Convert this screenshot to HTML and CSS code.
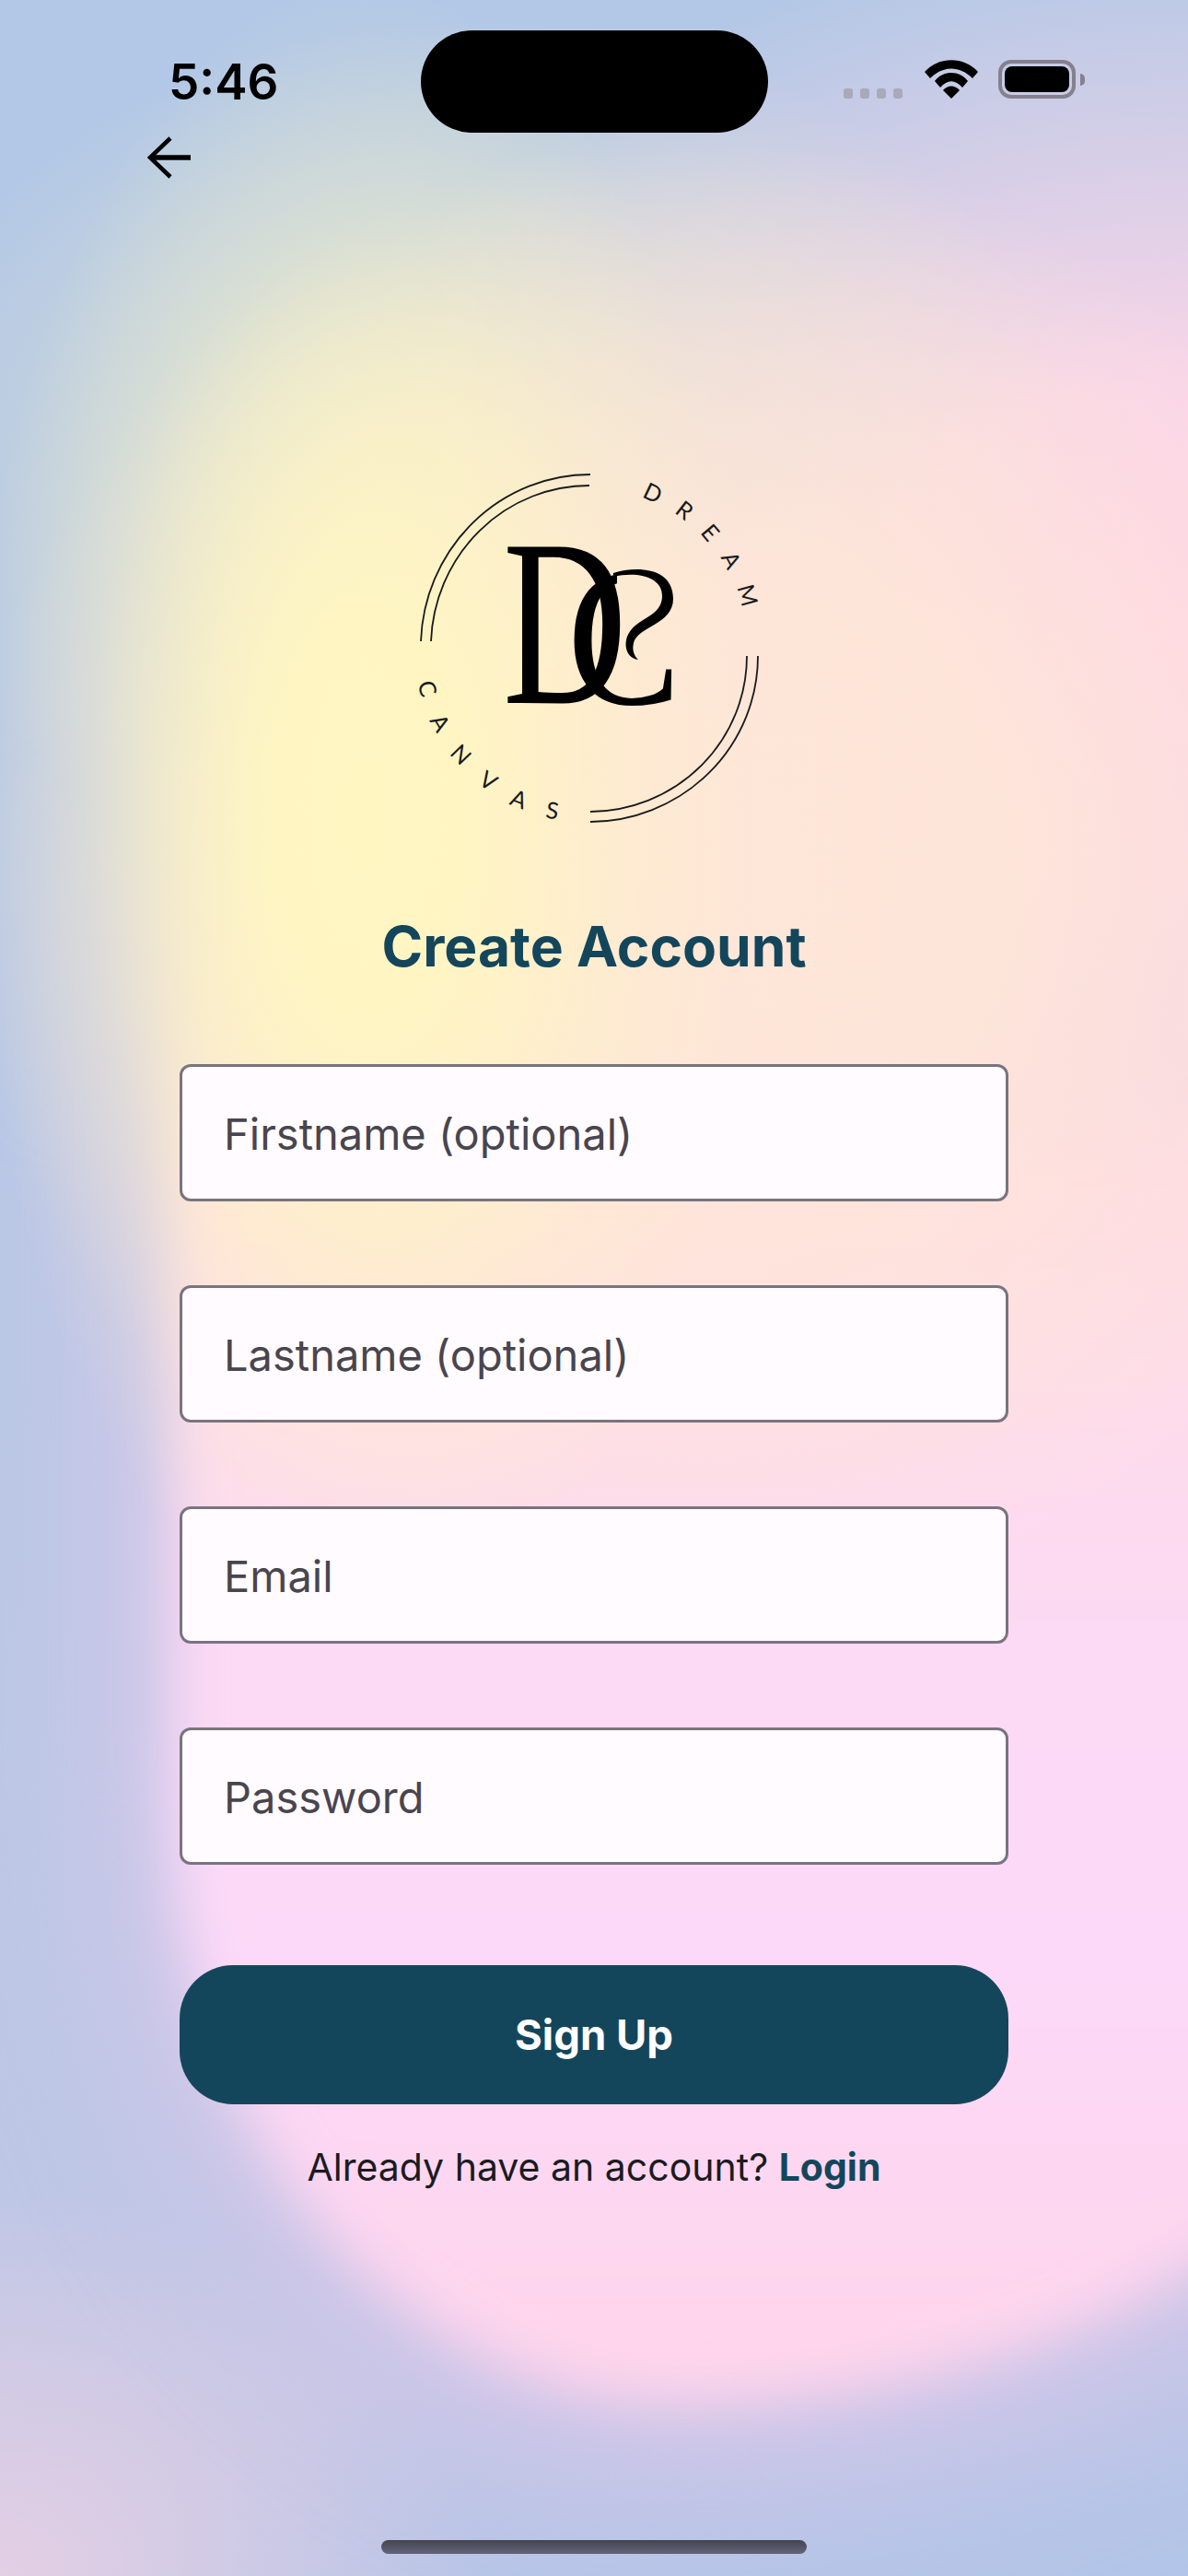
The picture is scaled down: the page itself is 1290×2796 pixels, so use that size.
FILE: index.html
```html
<!DOCTYPE html>
<html lang="en">
<head>
    <meta charset="UTF-8">
    <meta name="viewport" content="width=device-width, initial-scale=1.0">
    <title>Create Account</title>
    <link rel="stylesheet" href="styles.css">
</head>
<body>
    <div class="screen">
        <div class="blob-fade"><div class="blob"></div></div>
        <div class="glow"></div>

        <!-- Status bar -->
        <div class="status-bar">
            <div class="time">5:46</div>
            <div class="island"></div>
            <div class="status-icons">
                <div class="signal"><span></span><span></span><span></span><span></span></div>
                <svg class="wifi" width="58" height="42" viewBox="0 0 58 42">
                    <path d="M0 13 C15 -4 43 -4 58 13 L52 20 C38 6 20 6 6 20 Z"/>
                    <path d="M11 23 C20 11 38 11 47 23 L41 30 C33 21 25 21 17 30 Z"/>
                    <path d="M20 33 C25 27 33 27 38 33 L29 42 Z"/>
                </svg>
                <div class="battery"><div class="battery-fill"></div></div>
            </div>
        </div>

        <button class="back" aria-label="Back">
            <svg width="47" height="46" viewBox="0 0 47 46">
                <path d="M25 2 L3 23 L25 44" fill="none" stroke="#000" stroke-width="4.5"/>
                <path d="M3 23 H47" fill="none" stroke="#000" stroke-width="5.5"/>
            </svg>
        </button>

        <!-- Logo -->
        <svg class="logo" width="430" height="430" viewBox="0 0 430 430">
            <defs>
                <path id="dreamArc" d="M266 50 A172 172 0 0 1 379 183"/>
                <path id="canvasArc" d="M24 252 A190 190 0 0 0 193 402"/>
                <clipPath id="cClip">
                    <rect x="150" y="100" width="90" height="200"/>
                    <rect x="240" y="205" width="80" height="95"/>
                </clipPath>
            </defs>
            <g fill="none" stroke="#1a1a1a" stroke-width="1.8">
                <path d="M211 25 A184 188 0 0 0 27 206"/>
                <path d="M210 37 A172 176 0 0 0 38 206"/>
                <path d="M393 222 A183 180 0 0 1 211 402"/>
                <path d="M381 222 A171 169 0 0 1 211 391"/>
            </g>
            <text class="logo-ring logo-dream"><textPath href="#dreamArc">DREAM</textPath></text>
            <text class="logo-ring logo-canvas"><textPath href="#canvasArc">CANVAS</textPath></text>
            <text class="logo-d" transform="translate(116 273) scale(0.72 1)">D</text>
            <g clip-path="url(#cClip)">
                <text class="logo-c" transform="translate(186 274) scale(0.86 1)">C</text>
            </g>
            <path d="M236 132 C262 124 301 126 301 160 C301 188 262 190 258 208 C256 216 259 222 263 226 C248 224 246 205 255 194 C266 180 288 178 289 158 C290 136 262 130 236 136 Z"/>
        </svg>

        <h1 class="title">Create Account</h1>

        <!-- Form -->
        <form class="form">
            <input class="field" type="text" placeholder="Firstname (optional)">
            <input class="field" type="text" placeholder="Lastname (optional)">
            <input class="field" type="email" placeholder="Email">
            <input class="field" type="password" placeholder="Password">
            <button class="submit" type="button">Sign Up</button>
        </form>

        <p class="login">Already have an account? <a href="#">Login</a></p>

        <div class="home-bar"></div>
    </div>
</body>
</html>
```

FILE: styles.css
```css
* {
    box-sizing: border-box;
}

body {
    margin: 0;
    font-family: Inter, "Noto Sans", sans-serif;
    color: #1c1b1f;
}

.screen {
    position: relative;
    width: 1290px;
    height: 2796px;
    overflow: hidden;
    display: flex;
    flex-direction: column;
    background:
        radial-gradient(ellipse 520px 420px at 0 2796px, #e4cfe4 0%, rgba(228, 207, 228, 0) 100%),
        linear-gradient(172deg, #b2c8e6 0%, #b6c8e6 30%, #bcc8e6 70%, #c0c6e6 90%, #b2c5e8 100%);
}

/* Soft colour shapes behind the page */
.blob-fade {
    position: absolute;
    inset: 0;
    overflow: hidden;
    -webkit-mask-image: linear-gradient(180deg, transparent 780px, #000 1280px);
    mask-image: linear-gradient(180deg, transparent 780px, #000 1280px);
}

.blob {
    position: absolute;
    left: 185px;
    top: 0;
    width: 1500px;
    height: 2610px;
    border-radius: 560px 300px 945px 555px / 560px 300px 763px 660px;
    filter: blur(30px);
    box-shadow: 0 0 170px 60px rgba(216, 198, 234, 0.9);
    background: linear-gradient(180deg, #ffd9e3 0%, #ffd9e3 45%, #fedce8 55%, #fcd9f4 68%, #fcd9f8 82%, #fdd6f0 92%, #ffd4ea 100%);
}

.glow {
    position: absolute;
    inset: 0;
    background:
        radial-gradient(ellipse 430px 900px at 395px 880px, #fff6c2 0%, rgba(255, 246, 194, 0.95) 25%, rgba(255, 246, 194, 0.68) 45%, rgba(255, 246, 194, 0.28) 70%, rgba(255, 246, 194, 0) 100%),
        radial-gradient(ellipse 800px 800px at 760px 950px, #fee6d8 0%, rgba(254, 230, 216, 0.95) 40%, rgba(254, 230, 216, 0) 100%),
        radial-gradient(ellipse 650px 480px at 520px 500px, rgba(240, 238, 200, 0.75) 0%, rgba(240, 238, 200, 0) 100%),
        radial-gradient(ellipse 1000px 760px at 1290px 680px, #ffd4e8 0%, rgba(255, 214, 232, 0.92) 35%, rgba(255, 214, 232, 0) 100%);
}

.status-bar,
.back,
.logo,
.title,
.form,
.login,
.home-bar {
    position: relative;
}

/* Status bar */
.status-bar {
    display: flex;
    align-items: center;
    height: 111px;
    margin-top: 33px;
    padding-left: 183px;
}

.time {
    width: 274px;
    font-size: 53px;
    font-weight: 600;
    color: #000;
}

.island {
    width: 377px;
    height: 111px;
    border-radius: 56px;
    background: #000;
}

.status-icons {
    display: flex;
    align-items: flex-end;
    align-self: flex-start;
    height: 42px;
    margin-top: 32px;
    margin-left: 82px;
}

.signal {
    display: flex;
    gap: 8px;
}

.signal span {
    width: 10px;
    height: 11px;
    border-radius: 3px;
    background: #a9a9ba;
}

.wifi {
    margin: 0 22px 0 24px;
}

.battery {
    position: relative;
    width: 84px;
    height: 42px;
    border: 4px solid #84808f;
    border-radius: 14px;
    padding: 3px;
}

.battery::after {
    content: "";
    position: absolute;
    right: -14px;
    top: 11px;
    width: 5px;
    height: 13px;
    border-radius: 0 5px 5px 0;
    background: #84808f;
}

.battery-fill {
    height: 100%;
    border-radius: 8px;
    background: #000;
}

.back {
    align-self: flex-start;
    width: 47px;
    height: 46px;
    margin: 4px 0 0 160px;
    padding: 0;
    border: none;
    background: none;
}

.back svg {
    display: block;
}

/* Logo */
.logo {
    display: block;
    flex: none;
    margin: 296px 0 0 430px;
}

.logo-ring {
    font-family: Lato, sans-serif;
    font-size: 25px;
    fill: #1a1a1a;
}

.logo-dream {
    letter-spacing: 20px;
}

.logo-canvas {
    letter-spacing: 25px;
}

.logo-d {
    font-family: "Liberation Serif", serif;
    font-size: 259px;
    fill: #000;
}

.logo-c {
    font-family: "Liberation Serif", serif;
    font-size: 215px;
    fill: #000;
}

.title {
    margin: 70px 0 0;
    font-size: 60.5px;
    line-height: 74px;
    font-weight: 700;
    text-align: center;
    color: #14465b;
}

/* Form */
.form {
    display: flex;
    flex-direction: column;
    gap: 91px;
    margin-top: 91px;
    padding: 0 195px;
}

.field {
    width: 100%;
    height: 149px;
    padding: 2px 45px 0;
    border: 3px solid #79747e;
    border-radius: 12px;
    background: #fffbfe;
    font-family: inherit;
    font-size: 47px;
}

.field::placeholder {
    color: #49454f;
    opacity: 1;
}

.submit {
    height: 151px;
    margin-top: 18px;
    border: none;
    border-radius: 58px;
    background: #14465b;
    color: #fff;
    font-family: inherit;
    font-size: 45.5px;
    font-weight: 700;
}

.login {
    margin: 40px 0 0;
    font-size: 41px;
    line-height: 56px;
    text-align: center;
}

.login a {
    font-weight: 700;
    color: #14465b;
    text-decoration: none;
}

.home-bar {
    width: 462px;
    height: 15px;
    margin: auto auto 24px;
    border-radius: 8px;
    background: linear-gradient(#45454f, #62647a);
}
```
